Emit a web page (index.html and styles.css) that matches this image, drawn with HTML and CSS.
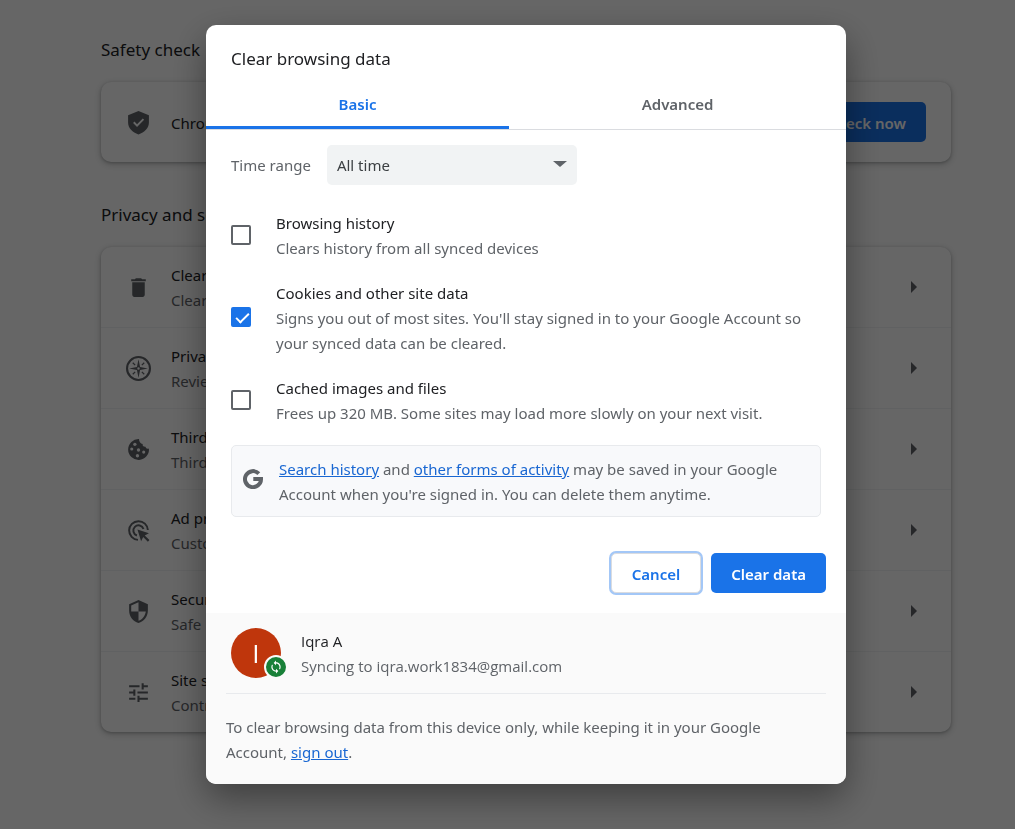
FILE: index.html
```
<!DOCTYPE html>
<html lang="en">

<head>
    <meta charset="UTF-8">
    <meta name="viewport" content="width=device-width, initial-scale=1.0">
    <title>Settings - Clear browsing data</title>
    <link rel="stylesheet" href="styles.css">
</head>

<body>
    <main class="settings">
        <h2>Safety check</h2>
        <section class="card">
            <div class="row safety">
                <svg class="icon" viewBox="0 0 24 24"><path fill-rule="evenodd" d="M12 1l10 4v7c0 5.500-4.200 9.500-10 11.500C6.200 21.500 2 17.500 2 12V5zM10.600 16.200l6.800-6.800-1.300-1.300-5.500 5.500-2.500-2.500-1.300 1.300z"/></svg>
                <p>Chrome can help keep you safe</p>
                <button type="button" class="btn primary">Check now</button>
            </div>
        </section>

        <h2>Privacy and security</h2>
        <section class="card">
            <a href="#" class="row">
                <svg class="icon" viewBox="0 0 24 24"><path d="M6 19c0 1.100.900 2 2 2h8c1.100 0 2-.900 2-2V7H6zM19 4h-3.500l-1-1h-5l-1 1H5v2h14z"/></svg>
                <p>Clear browsing data<small>Clear history and cookies</small></p>
                <span class="arrow"></span>
            </a>
            <a href="#" class="row">
                <svg class="icon" viewBox="0 0 24 24"><circle cx="12" cy="12" r="11" fill="none" stroke="currentColor" stroke-width="2"/><path fill-rule="evenodd" d="M12 3l1.500 7.500L21 12l-7.500 1.500L12 21l-1.500-7.500L3 12l7.500-1.500zM12 10.800a1.200 1.200 0 1 0 0 2.400 1.200 1.200 0 0 0 0-2.400z"/><path fill="none" stroke="currentColor" stroke-width="1.200" d="M6.500 6.500l2.300 2.300M17.500 6.500l-2.300 2.300M6.500 17.500l2.300-2.300M17.500 17.500l-2.300-2.300"/></svg>
                <p>Privacy Guide<small>Review key controls</small></p>
                <span class="arrow"></span>
            </a>
            <a href="#" class="row">
                <svg class="icon" viewBox="0 0 24 24"><path d="M12.500 2A10 10 0 1 0 22 11c-1.600.700-3-.100-3.300-1.600-2 .200-3-1-2.700-2.700-2.300-.200-3.500-2.200-3.500-4.700z"/><g class="crumbs"><circle cx="8.500" cy="7" r="1.600"/><circle cx="5.500" cy="11.500" r="1.500"/><circle cx="12" cy="12.500" r="1.600"/><circle cx="17" cy="14.500" r="1.500"/><circle cx="11" cy="18" r="1.600"/></g></svg>
                <p>Third-party cookies<small>Third-party cookies are blocked</small></p>
                <span class="arrow"></span>
            </a>
            <a href="#" class="row">
                <svg class="icon" viewBox="0 0 24 24"><path fill="none" stroke="currentColor" stroke-width="1.900" d="M11.500 21A9 9 0 1 1 21 11.500M10.500 16.800A5 5 0 1 1 16.800 10.500"/><path d="M11 11l11 3.700-4 2 4.500 4.500-1.500 1.500-4.500-4.500-2 4z"/></svg>
                <p>Ad privacy<small>Customize ad info</small></p>
                <span class="arrow"></span>
            </a>
            <a href="#" class="row">
                <svg class="icon" viewBox="0 0 24 24"><path fill-rule="evenodd" d="M12 1L3 5v6c0 5.550 3.840 10.740 9 12 5.160-1.260 9-6.450 9-12V5zM12 12h7c-.530 4.120-3.280 7.790-7 8.940V12H5V6.300l7-3.110z"/></svg>
                <p>Security<small>Safe Browsing</small></p>
                <span class="arrow"></span>
            </a>
            <a href="#" class="row">
                <svg class="icon" viewBox="0 0 24 24"><path d="M3 17v2h6v-2zM3 5v2h10V5zM13 21v-2h8v-2h-8v-2h-2v6zM7 9v2H3v2h4v2h2V9zM21 13v-2H11v2zM15 9h2V7h4V5h-4V3h-2z"/></svg>
                <p>Site settings<small>Controls what sites can use</small></p>
                <span class="arrow"></span>
            </a>
        </section>
    </main>

    <div class="backdrop">
        <div class="dialog" role="dialog" aria-labelledby="dialog-title">
            <h1 id="dialog-title">Clear browsing data</h1>
            <div class="tabs" role="tablist">
                <button type="button" role="tab" class="tab selected" aria-selected="true">Basic</button>
                <button type="button" role="tab" class="tab" aria-selected="false">Advanced</button>
            </div>

            <form class="body">
                <div class="time-range">
                    <label for="range">Time range</label>
                    <div class="select">
                        <select id="range">
                            <option>Last hour</option>
                            <option>Last 24 hours</option>
                            <option selected>All time</option>
                        </select>
                    </div>
                </div>

                <label class="option">
                    <input type="checkbox">
                    <span>Browsing history<small>Clears history from all synced devices</small></span>
                </label>
                <label class="option">
                    <input type="checkbox" checked>
                    <span>Cookies and other site data<small>Signs you out of most sites. You'll stay signed in to your Google Account so your synced data can be cleared.</small></span>
                </label>
                <label class="option">
                    <input type="checkbox">
                    <span>Cached images and files<small>Frees up 320 MB. Some sites may load more slowly on your next visit.</small></span>
                </label>

                <div class="notice">
                    <svg class="google" viewBox="0 0 20 20"><path fill="none" stroke="currentColor" stroke-width="4" d="M15.800 4.600A8 8 0 1 0 18 10H10.300"/></svg>
                    <p><a href="#">Search history</a> and <a href="#">other forms of activity</a> may be saved in your Google Account when you're signed in. You can delete them anytime.</p>
                </div>

                <div class="buttons">
                    <button type="button" class="btn cancel">Cancel</button>
                    <button type="button" class="btn primary">Clear data</button>
                </div>
            </form>

            <footer>
                <div class="account">
                    <div class="avatar">I
                        <span class="sync"><svg viewBox="0 0 24 24"><path d="M12 4V1L8 5l4 4V6c3.310 0 6 2.690 6 6 0 1.010-.250 1.970-.700 2.800l1.460 1.460A7.930 7.930 0 0 0 20 12c0-4.420-3.580-8-8-8zm0 14c-3.310 0-6-2.690-6-6 0-1.010.250-1.970.700-2.800L5.240 7.740A7.930 7.930 0 0 0 4 12c0 4.420 3.580 8 8 8v3l4-4-4-4z"/></svg></span>
                    </div>
                    <p>Iqra A<small>Syncing to iqra.work1834@gmail.com</small></p>
                </div>
                <p class="signout">To clear browsing data from this device only, while keeping it in your Google Account, <a href="#">sign out</a>.</p>
            </footer>
        </div>
    </div>
</body>

</html>
```
FILE: styles.css
```
* {
    margin: 0;
    padding: 0;
    box-sizing: border-box;
}

body {
    font: 15px/25px "Noto Sans", "Open Sans", sans-serif;
    color: #202124;
    background: #fff;
}

button, select {
    font: inherit;
    border: none;
}

small {
    display: block;
    font-size: 15px;
    color: #5f6368;
}

/* settings page */
.settings {
    padding: 37px 64px 0 101px;
}

h1, h2 {
    font-size: 17px;
    font-weight: 400;
    line-height: 25px;
}

.card {
    margin: 20px 0 40px;
    border-radius: 10px;
    box-shadow: 0 1px 3px rgba(60, 64, 67, .3), 0 2px 6px 1px rgba(60, 64, 67, .2);
}

.row {
    display: flex;
    align-items: center;
    gap: 20px;
    height: 81px;
    padding: 0 25px;
    color: inherit;
    text-decoration: none;
    border-bottom: 1px solid #f1f3f4;
}

.row:last-child {
    height: 80px;
    border-bottom: none;
}

.row p {
    flex: 1;
    padding-top: 2px;
}

.icon {
    width: 25px;
    height: 25px;
    fill: currentColor;
    color: #5f6368;
}

.crumbs {
    fill: #fff;
}

.arrow {
    margin-right: 9px;
    border: 6px solid transparent;
    border-left-color: #5f6368;
    border-right-width: 0;
}

.btn {
    height: 40px;
    padding: 2px 20px 0;
    border-radius: 5px;
    font-weight: 600;
}

.primary {
    color: #fff;
    background: #1a73e8;
}

/* dialog */
.backdrop {
    position: fixed;
    inset: 0;
    display: flex;
    justify-content: center;
    align-items: flex-start;
    padding: 25px 64px 25px 101px;
    background: rgba(0, 0, 0, .6);
}

.dialog {
    width: 100%;
    max-width: 640px;
    overflow: hidden;
    border-radius: 10px;
    background: #fff;
    box-shadow: 0 14px 36px rgba(0, 0, 0, .4);
}

h1 {
    padding: 21px 25px 9px;
}

.tabs {
    display: flex;
    border-bottom: 1px solid #dadce0;
}

.tab {
    flex: auto;
    height: 49px;
    padding-top: 2px;
    border-bottom: 3px solid transparent;
    font-weight: 600;
    color: #5f6368;
    background: none;
}

.tab.selected {
    color: #1a73e8;
    border-color: #1a73e8;
}

.body {
    padding: 15px 20px 20px 25px;
}

.time-range {
    display: flex;
    align-items: center;
    gap: 16px;
    margin-bottom: 26px;
    color: #5f6368;
}

.select {
    position: relative;
    width: 250px;
}

.select::after {
    content: "";
    position: absolute;
    top: 16px;
    right: 10px;
    border: 7px solid transparent;
    border-top: 6px solid #5f6368;
    border-bottom: none;
    pointer-events: none;
}

select {
    appearance: none;
    width: 100%;
    height: 40px;
    padding: 0 10px;
    border-radius: 5px;
    color: #3c4043;
    background: #f1f3f4;
}

.option {
    display: flex;
    align-items: center;
    gap: 25px;
    margin-top: 20px;
}

input {
    position: relative;
    flex: none;
    appearance: none;
    width: 20px;
    height: 20px;
    margin-bottom: 3px;
    border: 2px solid #5f6368;
    border-radius: 2px;
}

input:checked {
    border-color: #1a73e8;
    background: #1a73e8;
}

input:checked::after {
    content: "";
    position: absolute;
    top: 1px;
    left: 6px;
    width: 5px;
    height: 11px;
    border: solid #fff;
    border-width: 0 2px 2px 0;
    transform: rotate(45deg);
}

.notice {
    display: flex;
    align-items: center;
    gap: 16px;
    margin: 19px 5px 36px 0;
    padding: 11px 11px 9px;
    border: 1px solid #e8eaed;
    border-radius: 5px;
    color: #5f6368;
    background: #f8f9fb;
}

.google {
    flex: none;
    width: 20px;
    height: 20px;
    margin-bottom: 6px;
}

.dialog a {
    color: #1967d2;
}

.buttons {
    display: flex;
    justify-content: flex-end;
    gap: 10px;
}

.cancel {
    border: 1px solid #dadce0;
    color: #1a73e8;
    background: #fff;
    box-shadow: 0 0 0 2px #a3c7f7;
}

footer {
    padding: 0 20px 19px;
    color: #5f6368;
    background: #fafafa;
}

.account {
    display: flex;
    align-items: center;
    gap: 20px;
    height: 81px;
    padding-left: 5px;
    border-bottom: 1px solid #e8eaed;
    font-family: "Open Sans", sans-serif;
    color: #202124;
}

.avatar {
    position: relative;
    width: 50px;
    height: 50px;
    border-radius: 50%;
    font-size: 26px;
    line-height: 50px;
    text-align: center;
    color: #fff;
    background: #bf360c;
}

.sync {
    position: absolute;
    right: -7px;
    bottom: -1px;
    display: flex;
    padding: 3px;
    border: 2px solid #fafafa;
    border-radius: 50%;
    background: #188038;
}

.sync svg {
    width: 14px;
    height: 14px;
    fill: #fff;
}

.account p {
    padding-top: 2px;
}

.signout {
    padding: 21px 20px 0 0;
}
```
